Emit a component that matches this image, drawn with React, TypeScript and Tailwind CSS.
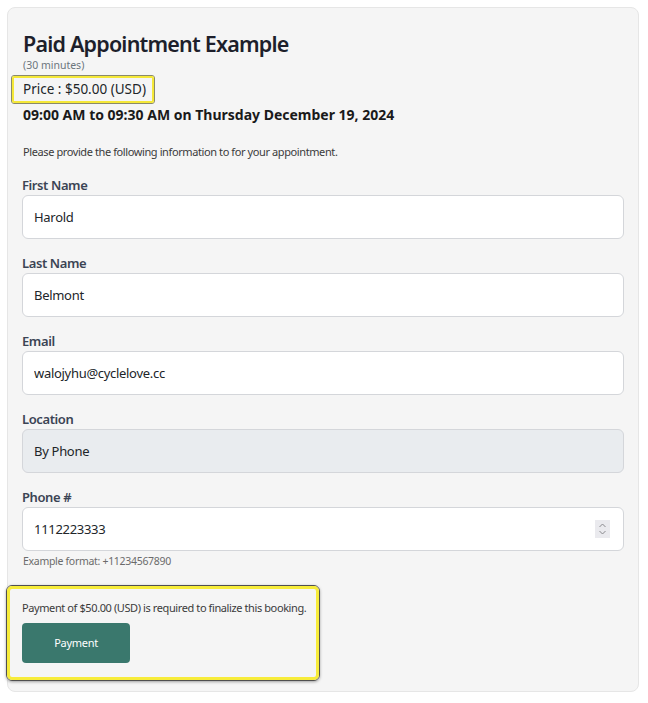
import React from "react";

const font = { fontFamily: '"Noto Sans", "Open Sans", sans-serif' };

function Field({
  label,
  value,
  disabled,
  spinner,
}: {
  label: string;
  value: string;
  disabled?: boolean;
  spinner?: boolean;
}) {
  return (
    <div className="mt-[15px] first:mt-0">
      <label className="block mb-[1px] text-[13px] leading-[18px] font-semibold text-[#3b4454] tracking-[-0.4px]">
        {label}
      </label>
      <div className="relative">
        <input
          readOnly
          value={value}
          className={`w-full h-[44px] rounded-[6px] border border-[#d4d6da] px-[11px] text-[13px] tracking-[-0.3px] text-[#212529] outline-none ${
            disabled ? "bg-[#e9ecef]" : "bg-white"
          }`}
        />
        {spinner && (
          <div className="absolute right-[14px] top-[13px] w-[15px] h-[18px] bg-[#eaeaee] flex items-center justify-center">
            <svg width="9" height="14" viewBox="0 0 9 14" fill="none" stroke="#8a8a8e" strokeWidth="1">
              <path d="M1.5 5 L4.5 2 L7.5 5" />
              <path d="M1.5 9 L4.5 12 L7.5 9" />
            </svg>
          </div>
        )}
      </div>
    </div>
  );
}

export default function App() {
  return (
    <div className="bg-white min-h-[703px] p-[7px] pr-[9px]" style={font}>
      <div className="bg-[#f5f5f5] border border-[#e6e6e6] rounded-[8px] px-[14px] pt-[22px] pb-[10px]">
        <h1 className="ml-[1px] text-[21.5px] leading-[28px] font-semibold text-[#1d1f2b] tracking-[-0.8px]">
          Paid Appointment Example
        </h1>
        <p className="ml-[1px] text-[10.5px] leading-[14px] text-[#6c757d]">(30 minutes)</p>

        {/* price highlight */}
        <div className="mt-[3px] -ml-[11px] inline-block rounded-[3px] border border-[#8a8a6a]">
          <div className="border-2 border-[#f5e838] rounded-[2px] pl-[9px] pr-[6px] py-[2px] text-[13.5px] leading-[19px] text-[#212529]">
            Price : $50.00 (USD)
          </div>
        </div>

        <p className="ml-[1px] text-[14px] leading-[20px] font-bold text-[#1a1a1a] mt-[1px]">
          09:00 AM to 09:30 AM on Thursday December 19, 2024
        </p>

        <p className="ml-[1px] mt-[19px] text-[11px] leading-[16px] text-[#3b3b3b] tracking-[-0.4px]">
          Please provide the following information to for your appointment.
        </p>

        <div className="mt-[16px]">
          <Field label="First Name" value="Harold" />
          <Field label="Last Name" value="Belmont" />
          <Field label="Email" value="walojyhu@cyclelove.cc" />
          <Field label="Location" value="By Phone" disabled />
          <Field label="Phone #" value="1112223333" spinner />
          <p className="ml-[1px] mt-[2px] text-[10.5px] leading-[16px] text-[#6b6b6b] tracking-[-0.3px]">
            Example format: +11234567890
          </p>
        </div>

        {/* payment highlight */}
        <div className="mt-[16px] -ml-[16px] w-[314px] rounded-[6px] border border-[#505050] shadow-[0_1px_3px_rgba(0,0,0,0.35)]">
          <div className="border-[3px] border-[#f7ec3a] rounded-[5px] px-[12px] pt-[11px] pb-[14px]">
            <p className="text-[11px] leading-[16px] text-[#3b3b3b] tracking-[-0.4px] whitespace-nowrap">
              Payment of $50.00 (USD) is required to finalize this booking.
            </p>
            <button className="mt-[7px] w-[108px] h-[40px] rounded-[4px] bg-[#3a786d] text-white text-[11px] tracking-[-0.3px]">
              Payment
            </button>
          </div>
        </div>
      </div>
    </div>
  );
}
